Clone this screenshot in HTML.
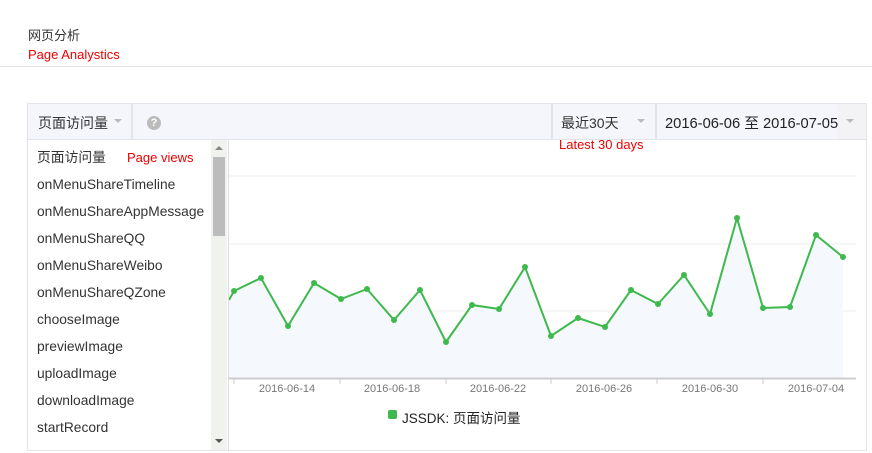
<!DOCTYPE html>
<html><head><meta charset="utf-8"><style>
body{margin:0;width:872px;height:453px;background:#fff;font-family:"Liberation Sans","Noto Sans CJK SC",sans-serif;position:relative;overflow:hidden;font-size:13px;color:#333}
.a{position:absolute;white-space:nowrap}
.red{color:#e00}
</style></head><body>
<div class="a" style="left:28px;top:25px;font-size:13px">网页分析</div>
<div class="a red" style="left:28px;top:47px;font-size:13px">Page Analystics</div>
<div class="a" style="left:0;top:66px;width:872px;height:1px;background:#e5e5ec"></div>

<div class="a" style="left:27px;top:103px;width:838px;height:346px;border:1px solid #e3e3ea"></div>
<div class="a" style="left:28px;top:104px;width:838px;height:35px;background:#f5f6fc;border-bottom:1px solid #e3e3ea"></div>
<div class="a" style="left:131px;top:104px;width:2px;height:35px;background:#e3e3ea"></div>
<div class="a" style="left:551px;top:104px;width:2px;height:35px;background:#e3e3ea"></div>
<div class="a" style="left:655px;top:104px;width:2px;height:35px;background:#e3e3ea"></div>
<div class="a" style="left:838px;top:104px;width:28px;height:35px;background:#f3f3f5"></div>
<div class="a" style="left:38px;top:113px;font-size:14px">页面访问量</div>
<div class="a" style="left:114px;top:119px;border:4px solid transparent;border-top:4px solid #bbb"></div>
<div class="a" style="left:147px;top:116px;width:14px;height:14px;border-radius:50%;background:#bbb;color:#fff;font-size:11px;font-weight:bold;text-align:center;line-height:14px">?</div>
<div class="a" style="left:561px;top:113px;font-size:14px">最近30天</div>
<div class="a" style="left:637px;top:119px;border:4px solid transparent;border-top:4px solid #bbb"></div>
<div class="a" style="left:665px;top:112px;font-size:14.7px;color:#222">2016-06-06 至 2016-07-05</div>
<div class="a" style="left:846px;top:119px;border:4px solid transparent;border-top:4px solid #bbb"></div>
<div class="a red" style="left:559px;top:137px;font-size:13px">Latest 30 days</div>

<svg class="a" style="left:0;top:0" width="872" height="453">
<line x1="229" y1="176" x2="856" y2="176" stroke="#eee"/>
<line x1="229" y1="244" x2="856" y2="244" stroke="#eee"/>
<line x1="229" y1="311" x2="856" y2="311" stroke="#eee"/>
<polygon fill="#f5f8fd" points="229,378 229,300 234,291 261,278 288,326 314,283 341,299 367,289 394,320 420,290 446,342 472,305 499,309 525,267 551,336 578,318 605,327 631,290 658,304 684,275 710,314 737,218 763,308 790,307 816,235 843,257 843,378"/>
<polyline fill="none" stroke="#3eb94d" stroke-width="2" points="229,300 234,291 261,278 288,326 314,283 341,299 367,289 394,320 420,290 446,342 472,305 499,309 525,267 551,336 578,318 605,327 631,290 658,304 684,275 710,314 737,218 763,308 790,307 816,235 843,257"/>
<g fill="#3eb94d">
<circle cx="234" cy="291" r="3"/><circle cx="261" cy="278" r="3"/><circle cx="288" cy="326" r="3"/><circle cx="314" cy="283" r="3"/><circle cx="341" cy="299" r="3"/><circle cx="367" cy="289" r="3"/><circle cx="394" cy="320" r="3"/><circle cx="420" cy="290" r="3"/><circle cx="446" cy="342" r="3"/><circle cx="472" cy="305" r="3"/><circle cx="499" cy="309" r="3"/><circle cx="525" cy="267" r="3"/><circle cx="551" cy="336" r="3"/><circle cx="578" cy="318" r="3"/><circle cx="605" cy="327" r="3"/><circle cx="631" cy="290" r="3"/><circle cx="658" cy="304" r="3"/><circle cx="684" cy="275" r="3"/><circle cx="710" cy="314" r="3"/><circle cx="737" cy="218" r="3"/><circle cx="763" cy="308" r="3"/><circle cx="790" cy="307" r="3"/><circle cx="816" cy="235" r="3"/><circle cx="843" cy="257" r="3"/>
</g>
<line x1="229" y1="378.5" x2="856" y2="378.5" stroke="#ccc" stroke-width="2"/>
<g stroke="#ccc"><line x1="234" y1="379" x2="234" y2="384"/><line x1="340" y1="379" x2="340" y2="384"/><line x1="446" y1="379" x2="446" y2="384"/><line x1="551" y1="379" x2="551" y2="384"/><line x1="657" y1="379" x2="657" y2="384"/><line x1="763" y1="379" x2="763" y2="384"/></g>
<g font-size="11" fill="#777" text-anchor="middle" font-family="Liberation Sans,sans-serif">
<text x="287" y="392">2016-06-14</text><text x="392" y="392">2016-06-18</text><text x="498" y="392">2016-06-22</text><text x="604" y="392">2016-06-26</text><text x="710" y="392">2016-06-30</text><text x="816" y="392">2016-07-04</text>
</g>
<rect x="388" y="410" width="9" height="9" rx="2" fill="#3eb94d"/>
</svg>
<div class="a" style="left:402px;top:407px;font-size:13.5px;color:#222">JSSDK: 页面访问量</div>

<div class="a" style="left:28px;top:140px;width:200px;height:310px;background:#fff;border-right:1px solid #ddd"></div>
<div class="a" style="left:211px;top:140px;width:16px;height:310px;background:#f0f2ee"></div>
<div class="a" style="left:213px;top:157px;width:12px;height:79px;background:#bcbcbc"></div>
<div class="a" style="left:215px;top:146px;border:4px solid transparent;border-bottom:4px solid #888;border-top:0"></div>
<div class="a" style="left:215px;top:439px;border:4px solid transparent;border-top:4px solid #555;border-bottom:0"></div>
<div class="a" style="left:37px;top:144px;font-size:13.8px;line-height:27px;color:#333">页面访问量<br>onMenuShareTimeline<br>onMenuShareAppMessage<br>onMenuShareQQ<br>onMenuShareWeibo<br>onMenuShareQZone<br>chooseImage<br>previewImage<br>uploadImage<br>downloadImage<br>startRecord</div>
<div class="a red" style="left:127px;top:150px;font-size:13px">Page views</div>
</body></html>
